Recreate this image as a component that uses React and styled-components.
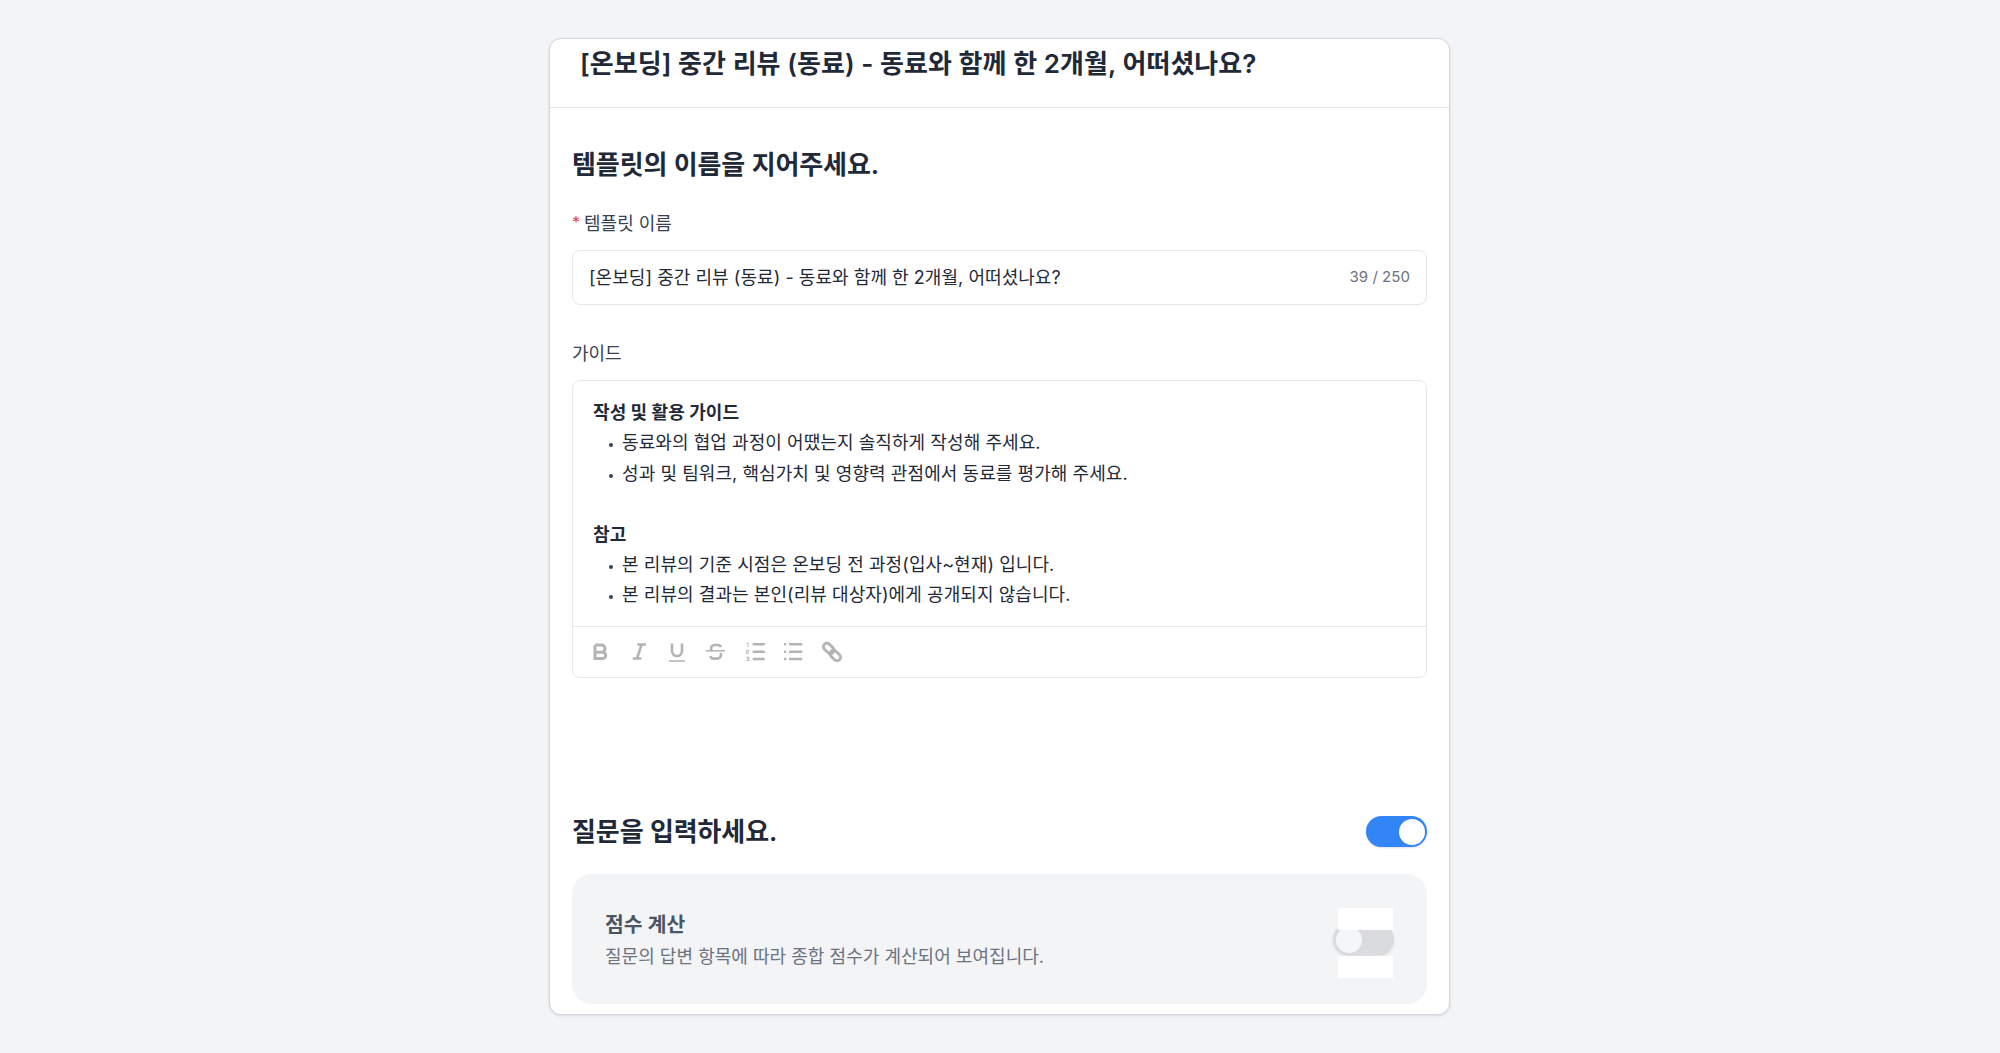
import React from 'react';
import styled, { createGlobalStyle } from 'styled-components';

const GlobalStyle = createGlobalStyle`
  html, body {
    margin: 0;
    padding: 0;
    height: 100%;
    background-color: #f3f4f6;
    font-family: Inter, "Noto Sans CJK KR", sans-serif;
  }
  * {
    box-sizing: border-box;
  }
`;

const Page = styled.div`
  display: flex;
  justify-content: center;
  height: 1053px;
  padding: 38px 1px 0 0;
  overflow: hidden;
`;

const Card = styled.div`
  width: 901px;
  height: 977px;
  background-color: #fff;
  border: 1px solid #d1d5db;
  border-radius: 12px;
  box-shadow: 0 1px 3px rgba(0, 0, 0, 0.1);
  overflow: hidden;
`;

const Header = styled.div`
  height: 69px;
  padding: 8px 30px 0;
  border-bottom: 1px solid #e5e7eb;
`;

const Title = styled.h1`
  margin: 0;
  font-size: 26px;
  line-height: 34px;
  font-weight: 600;
  letter-spacing: 0.06px;
  color: #1f2937;
`;

const Body = styled.div`
  padding: 39px 22px 0;
`;

const SectionTitle = styled.h2`
  margin: 0;
  font-size: 26px;
  line-height: 36px;
  font-weight: 600;
  letter-spacing: -0.1px;
  color: #1f2937;
`;

const FieldLabel = styled.div`
  display: flex;
  gap: 4px;
  margin-top: ${({ top }) => top}px;
  font-size: 18px;
  line-height: 28px;
  color: #374151;
`;

const Required = styled.span`
  color: #ef4444;
  font-size: 16px;
  line-height: 24px;
`;

const InputBox = styled.div`
  display: flex;
  align-items: center;
  justify-content: space-between;
  height: 55px;
  margin-top: 12px;
  padding: 0 16px 3px;
  border: 1px solid #e5e7eb;
  border-radius: 8px;
  font-size: 18px;
  letter-spacing: 0.05px;
  color: #1f2937;
`;

const Counter = styled.span`
  font-size: 15px;
  color: #6b7280;
`;

const Editor = styled.div`
  margin-top: 12px;
  border: 1px solid #e5e7eb;
  border-radius: 8px;
`;

const EditorText = styled.div`
  padding: 17px 20px 15px;
  font-size: 18px;
  line-height: 30.4px;
  letter-spacing: 0.07px;
  color: #1f2937;
`;

const Bold = styled.div`
  font-weight: 700;
  min-height: 30.4px;
`;

const Bullet = styled.div`
  position: relative;
  padding-left: 29px;
  &::before {
    content: '';
    position: absolute;
    left: 16px;
    top: 15px;
    width: 4px;
    height: 4px;
    border-radius: 50%;
    background-color: #374151;
  }
`;

const Toolbar = styled.div`
  display: flex;
  align-items: center;
  gap: 14.7px;
  height: 51px;
  padding: 0 15px;
  border-top: 1px solid #e5e7eb;
`;

const ToolIcon = styled.svg`
  flex: none;
  width: 24px;
  height: 24px;
  fill: none;
  stroke: #b4b4b4;
  stroke-width: 2.6;
`;

const SectionRow = styled.div`
  display: flex;
  align-items: center;
  justify-content: space-between;
  margin-top: 136px;
`;

const Toggle = styled.div`
  position: relative;
  flex: none;
  width: 61px;
  height: 31px;
  border-radius: 16px;
  background-color: ${({ on }) => (on ? '#3385f6' : '#d9dbde')};
  box-shadow: 0 1px 2px rgba(0, 0, 0, 0.12);
`;

const Knob = styled.span`
  position: absolute;
  top: 2.5px;
  left: ${({ on }) => (on ? '33px' : '3px')};
  width: 26px;
  height: 26px;
  border-radius: 50%;
  background-color: ${({ on }) => (on ? '#fff' : '#f5f6f8')};
`;

const ScorePanel = styled.div`
  display: flex;
  align-items: center;
  justify-content: space-between;
  height: 130px;
  margin-top: 24px;
  padding: 0 34px 0 33px;
  border-radius: 20px;
  background-color: #f3f4f6;
`;

const ScoreText = styled.div`
  margin-top: 4px;
`;

const ScoreTitle = styled.div`
  font-size: 20.4px;
  line-height: 32px;
  font-weight: 600;
  color: #4b5563;
`;

const ScoreDesc = styled.div`
  font-size: 18px;
  line-height: 31px;
  letter-spacing: 0.03px;
  color: #6b7280;
`;

/* white strips sit over the toggle and hide its top and bottom edge */
const ToggleSlot = styled.div`
  position: relative;
  display: flex;
  align-items: center;
  flex: none;
  width: 55px;
  height: 70px;
  margin-top: 9px;
  &::before,
  &::after {
    content: '';
    position: absolute;
    z-index: 1;
    left: 0;
    right: 0;
    height: 22px;
    background-color: #fff;
  }
  &::before {
    top: 0;
  }
  &::after {
    bottom: 0;
  }
  ${Toggle} {
    margin: -7px -1px 0 -5px;
  }
`;

export default function App() {
  return (
    <>
      <GlobalStyle />
      <Page>
        <Card>
          <Header>
            <Title>[온보딩] 중간 리뷰 (동료) - 동료와 함께 한 2개월, 어떠셨나요?</Title>
          </Header>
          <Body>
            <SectionTitle>템플릿의 이름을 지어주세요.</SectionTitle>
            <FieldLabel top={27}>
              <Required>*</Required>
              템플릿 이름
            </FieldLabel>
            <InputBox>
              [온보딩] 중간 리뷰 (동료) - 동료와 함께 한 2개월, 어떠셨나요?
              <Counter>39 / 250</Counter>
            </InputBox>
            <FieldLabel top={35}>가이드</FieldLabel>
            <Editor>
              <EditorText>
                <Bold>작성 및 활용 가이드</Bold>
                <Bullet>동료와의 협업 과정이 어땠는지 솔직하게 작성해 주세요.</Bullet>
                <Bullet>성과 및 팀워크, 핵심가치 및 영향력 관점에서 동료를 평가해 주세요.</Bullet>
                <Bold />
                <Bold>참고</Bold>
                <Bullet>본 리뷰의 기준 시점은 온보딩 전 과정(입사~현재) 입니다.</Bullet>
                <Bullet>본 리뷰의 결과는 본인(리뷰 대상자)에게 공개되지 않습니다.</Bullet>
              </EditorText>
              <Toolbar>
                <ToolIcon viewBox="0 0 24 24">
                  <path d="M7 5h6.5a3.6 3.6 0 0 1 0 7.2H7M7 12.2h7.5a3.2 3.2 0 0 1 0 6.4H7V5" strokeWidth="3" />
                </ToolIcon>
                <ToolIcon viewBox="0 0 24 24">
                  <path d="M10.3 4.5H19M5.7 18.5h8.6M14.6 4.5 10 18.5" />
                </ToolIcon>
                <ToolIcon viewBox="0 0 24 24">
                  <path d="M7 3.5V11a5 5 0 0 0 10 0V3.5" />
                  <path d="M4 21h16" strokeWidth="1.6" />
                </ToolIcon>
                <ToolIcon viewBox="0 0 24 24">
                  <path d="M17 7a3.5 3 0 0 0-3.5-2h-3A3.8 3.4 0 0 0 7 8.5c0 1 .3 1.6 1 2.2M16.2 13c.5.6.8 1.2.8 2.2a3.8 3.4 0 0 1-3.8 3.4h-3A3.5 3 0 0 1 6.5 16" />
                  <path d="M1.7 10.8H21" strokeWidth="1.5" />
                </ToolIcon>
                <ToolIcon viewBox="0 0 24 24">
                  <path d="M9.7 4.3h12M9.7 11.7h12M9.7 19h12" strokeWidth="2.4" />
                  <path d="M3.6 3h1.4v4M3.2 10.2h2.6v1.5H3.2v1.6h2.8M3.2 17.2h2.8v1.6H4.4h1.6v1.7H3.2" strokeWidth="0.9" />
                </ToolIcon>
                <ToolIcon viewBox="0 0 24 24">
                  <path d="M8 4.3h13.3M8 11.7h13.3M8 19h13.3" strokeWidth="2.4" />
                  <path d="M3 4.3h2.3M3 11.7h2.3M3 19h2.3" strokeWidth="2.4" />
                </ToolIcon>
                <ToolIcon viewBox="0 0 24 24">
                  <rect x="2.7" y="5" width="12" height="7" rx="3.5" transform="rotate(45 8.7 8.5)" strokeWidth="2.8" />
                  <rect x="9.3" y="12" width="12" height="7" rx="3.5" transform="rotate(45 15.3 15.5)" strokeWidth="2.8" />
                </ToolIcon>
              </Toolbar>
            </Editor>
            <SectionRow>
              <SectionTitle>질문을 입력하세요.</SectionTitle>
              <Toggle on>
                <Knob on />
              </Toggle>
            </SectionRow>
            <ScorePanel>
              <ScoreText>
                <ScoreTitle>점수 계산</ScoreTitle>
                <ScoreDesc>질문의 답변 항목에 따라 종합 점수가 계산되어 보여집니다.</ScoreDesc>
              </ScoreText>
              <ToggleSlot>
                <Toggle>
                  <Knob />
                </Toggle>
              </ToggleSlot>
            </ScorePanel>
          </Body>
        </Card>
      </Page>
    </>
  );
}
